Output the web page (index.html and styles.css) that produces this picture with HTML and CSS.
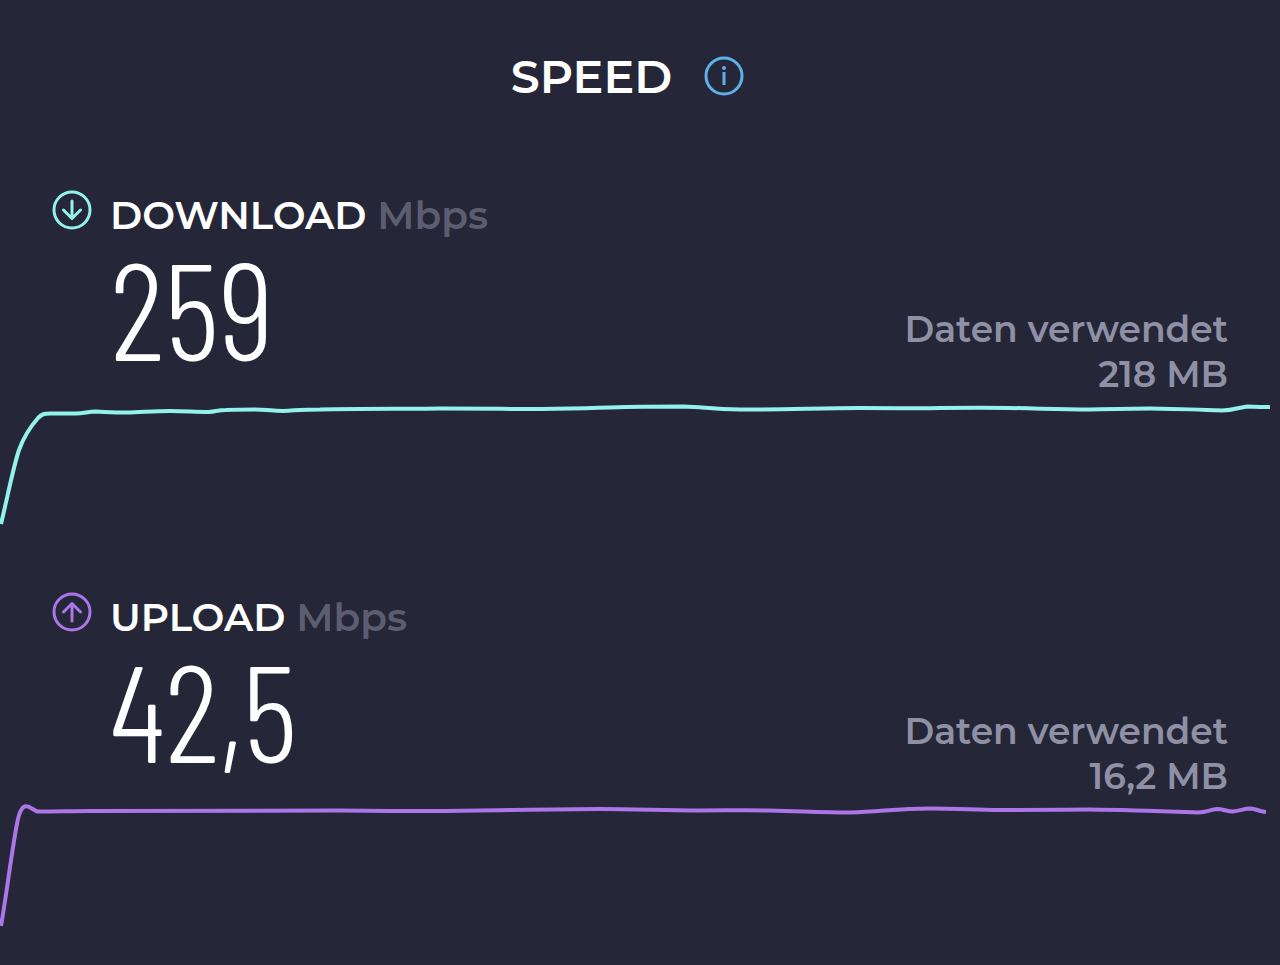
FILE: index.html
```html
<!DOCTYPE html>
<html lang="de">
    <head>
        <meta charset="utf-8">
        <meta name="viewport" content="width=device-width, initial-scale=1">
        <title>Speed</title>
        <link rel="stylesheet" href="styles.css">
    </head>
    <body>
        <main>
            <header class="top">
                <h1>SPEED</h1>
                <button class="info" type="button" aria-label="Info">
                    <svg viewBox="0 0 40 40" fill="none" stroke="currentColor" stroke-width="3">
                        <circle cx="20" cy="20" r="18"/>
                        <path d="M20 16v13"/>
                        <circle cx="20" cy="12" r="2" fill="currentColor" stroke="none"/>
                    </svg>
                </button>
            </header>

            <section class="result download">
                <div class="summary">
                    <svg class="arrow" viewBox="0 0 40 40" fill="none" stroke="currentColor" stroke-width="3" stroke-linecap="round" stroke-linejoin="round">
                        <circle cx="20" cy="20" r="18"/>
                        <path d="M20 11v17M11.500 20l8.500 8.500 8.500-8.500"/>
                    </svg>
                    <div class="reading">
                        <h2>DOWNLOAD <span class="unit">Mbps</span></h2>
                        <p class="value">259</p>
                    </div>
                    <p class="data">Daten verwendet<br>218 MB</p>
                </div>
                <svg class="chart" viewBox="0 0 1280 130" fill="none" stroke="currentColor" stroke-width="4">
                    <path d="M1 124C8 95 13 68 19 50C24 36 31 26 38 18C42 14 44 13.500 50 13.500C60 13.500 66 13.500 76 13.500C84 13.500 88 11.500 96 11.500C108 12 114 12.500 126 12.500C144 12 154 11 170 11C186 11 194 12 209 12C216 11.500 218 10 226 10C238 9.500 244 9.500 254 9.500C268 9.500 272 11 283 11C296 10.500 300 9.500 320 9.500C360 8.500 400 9 440 8.500C480 8.500 500 9 530 9C560 8.500 580 8.500 610 7.500C640 6.500 660 6.500 684 6.500C704 7 712 9.500 740 9.500C780 10 820 8 860 8C900 8 920 8.500 940 8C970 7.500 990 7.500 1010 8C1040 8.500 1060 9.500 1090 9.500C1110 9 1130 8.500 1150 8.500C1180 9 1200 9.500 1222 10.500C1234 10.500 1238 7.500 1247 6.500C1254 6.500 1258 7.500 1270 7"/>
                </svg>
            </section>

            <section class="result upload">
                <div class="summary">
                    <svg class="arrow" viewBox="0 0 40 40" fill="none" stroke="currentColor" stroke-width="3" stroke-linecap="round" stroke-linejoin="round">
                        <circle cx="20" cy="20" r="18"/>
                        <path d="M20 29V12M11.500 20l8.500-8.500 8.500 8.500"/>
                    </svg>
                    <div class="reading">
                        <h2>UPLOAD <span class="unit">Mbps</span></h2>
                        <p class="value">42,5</p>
                    </div>
                    <p class="data">Daten verwendet<br>16,2 MB</p>
                </div>
                <svg class="chart" viewBox="0 0 1280 130" fill="none" stroke="currentColor" stroke-width="4">
                    <path d="M1 124C7 90 13 39 18 17C21 4 25 2 31 6L37 9.500C60 9.500 70 9 90 9C180 8.500 260 8.500 340 8.500C380 9 400 9 440 9C500 8.500 550 7 600 7C640 7 660 8.500 700 8.500C730 8.500 740 8 770 8.500C800 9 820 10.500 850 10.500C880 10 895 6.500 930 6.500C960 6.500 975 8 1000 8C1040 8 1060 7.500 1090 7.500C1130 8 1170 9.500 1198 10.500C1207 10.500 1210 7.500 1217 7C1223 7 1227 9.500 1233 9.500C1240 9 1244 6.500 1250 6.500C1256 7 1260 9.500 1266 10"/>
                </svg>
            </section>
        </main>
    </body>
</html>
```
FILE: styles.css
```css
* {
    box-sizing: border-box;
    margin: 0;
    padding: 0;
}

body {
    background-color: #252638;
    color: white;
    font-family: Montserrat, Inter, sans-serif;
}

h1, h2, .data {
    font-weight: 600;
}

.top {
    display: flex;
    justify-content: center;
    align-items: center;
    gap: 32px;
    height: 152px;
    padding-right: 25px;
}

h1 {
    font-size: 46px;
}

.info {
    width: 40px;
    height: 40px;
    background: none;
    border: none;
    color: #5fb0e8;
    cursor: pointer;
}

svg {
    display: block;
}

.result {
    padding: 38px 0 24px;
}

.summary {
    display: flex;
    padding: 0 52px;
    margin-bottom: 3px;
}

.arrow {
    width: 40px;
    height: 40px;
    margin-right: 18px;
}

.reading {
    margin-bottom: 25px;
}

h2 {
    font-size: 39px;
    line-height: 50px;
}

.unit {
    color: #5c5d70;
}

.value {
    font-family: "Barlow Condensed", "Roboto Condensed", "Liberation Sans Narrow", sans-serif;
    font-size: 138px;
    font-weight: 300;
    line-height: 132px;
}

.data {
    margin-left: auto;
    align-self: flex-end;
    color: #8f90a5;
    font-size: 36px;
    line-height: 45px;
    text-align: right;
}

.chart {
    width: 100%;
}

.download .arrow,
.download .chart {
    color: #93f3eb;
}

.upload .arrow,
.upload .chart {
    color: #ab76e8;
}
```
